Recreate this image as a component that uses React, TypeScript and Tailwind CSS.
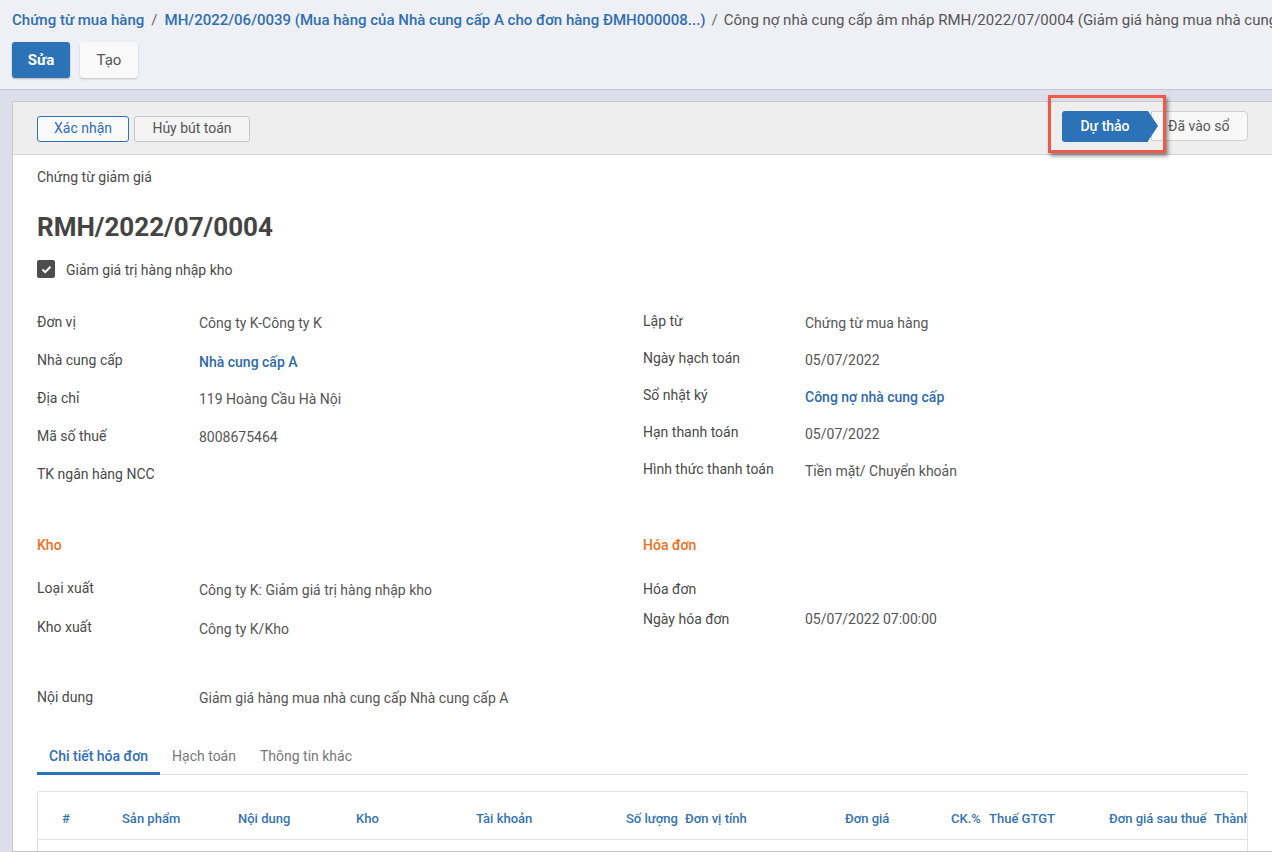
import React from "react";

const font = { fontFamily: "Roboto, 'Noto Sans', sans-serif" };

type Field = { label: string; value?: string; link?: boolean };

const leftFields: Field[] = [
  { label: "Đơn vị", value: "Công ty K-Công ty K" },
  { label: "Nhà cung cấp", value: "Nhà cung cấp A", link: true },
  { label: "Địa chỉ", value: "119 Hoàng Cầu Hà Nội" },
  { label: "Mã số thuế", value: "8008675464" },
  { label: "TK ngân hàng NCC" },
];

const rightFields: Field[] = [
  { label: "Lập từ", value: "Chứng từ mua hàng" },
  { label: "Ngày hạch toán", value: "05/07/2022" },
  { label: "Sổ nhật ký", value: "Công nợ nhà cung cấp", link: true },
  { label: "Hạn thanh toán", value: "05/07/2022" },
  { label: "Hình thức thanh toán", value: "Tiền mặt/ Chuyển khoản" },
];

const columns: { name: string; w: number }[] = [
  { name: "#", w: 60 },
  { name: "Sản phẩm", w: 116 },
  { name: "Nội dung", w: 118 },
  { name: "Kho", w: 120 },
  { name: "Tài khoản", w: 150 },
  { name: "Số lượng", w: 59 },
  { name: "Đơn vị tính", w: 160 },
  { name: "Đơn giá", w: 106 },
  { name: "CK.%", w: 38 },
  { name: "Thuế GTGT", w: 120 },
  { name: "Đơn giá sau thuế", w: 105 },
  { name: "Thành tiền", w: 120 },
];

function FieldRow({ f, h }: { f: Field; h: string }) {
  return (
    <div className={`flex items-center ${h}`}>
      <div className="w-[162px] shrink-0 text-[14px] text-[#4a4a4a]">{f.label}</div>
      {f.value && (
        <div
          className={
            f.link
              ? "pt-[4px] text-[14px] font-medium text-[#2f6aa8]"
              : "pt-[3px] text-[14px] text-[#555]"
          }
        >
          {f.value}
        </div>
      )}
    </div>
  );
}

export default function App() {
  return (
    <div
      className="relative flex h-[852px] w-[1272px] flex-col overflow-hidden bg-[#dcdeea]"
      style={font}
    >
      {/* top control panel */}
      <div className="shrink-0 border-b border-[#c3c5cf] bg-[#eff0f5] pl-[12px]">
        <div className="flex h-[30px] items-end overflow-hidden whitespace-nowrap text-[15px] leading-[20px]">
          <span className="font-medium text-[#2f6fb0]">Chứng từ mua hàng</span>
          <span className="mx-[7px] text-[#666]">/</span>
          <span className="font-medium text-[#2f6fb0]">
            MH/2022/06/0039 (Mua hàng của Nhà cung cấp A cho đơn hàng ĐMH000008...)
          </span>
          <span className="mx-[6px] text-[#666]">/</span>
          <span className="text-[#555]">
            Công nợ nhà cung cấp âm nháp RMH/2022/07/0004 (Giảm giá hàng mua nhà cung cấp Nhà cung cấp A)
          </span>
        </div>
        <div className="flex gap-[10px] pb-[11px] pt-[12px]">
          <button className="h-[36px] w-[58px] rounded-[3px] bg-[#2b73b6] text-[15px] font-bold text-white shadow-[0_1px_2px_rgba(0,0,0,0.25)]">
            Sửa
          </button>
          <button className="h-[36px] w-[58px] rounded-[3px] bg-[#f9f9f9] text-[15px] text-[#555] shadow-[0_1px_2px_rgba(0,0,0,0.2)]">
            Tạo
          </button>
        </div>
      </div>

      {/* card */}
      <div className="ml-[12px] mt-[11px] flex min-h-0 flex-1 flex-col overflow-hidden border border-r-0 border-[#c8c8cc] bg-white">
        <div className="flex h-[53px] shrink-0 items-center justify-between border-b border-[#d4d4d4] bg-[#eeeeee] pl-[24px] pr-[24px]">
          <div className="flex gap-[5px] pt-[1px]">
            <button className="h-[26px] w-[92px] rounded-[3px] border border-[#2f72b3] bg-[#f9f9f9] text-[14px] text-[#2f6db5]">
              Xác nhận
            </button>
            <button className="h-[26px] w-[116px] rounded-[3px] border border-[#c6c6c6] bg-[#f4f4f4] text-[14px] text-[#555]">
              Hủy bút toán
            </button>
          </div>
          <div className="flex items-center pb-[4px]">
            <div className="relative z-10 flex items-center">
              <div className="flex h-[31px] w-[86px] items-center justify-center rounded-l-[3px] bg-[#2b73b6] text-[14px] font-medium text-white">
                Dự thảo
              </div>
              <div className="h-0 w-0 border-y-[15.5px] border-l-[10px] border-y-transparent border-l-[#2b73b6]" />
            </div>
            <div className="-ml-[7px] flex h-[30px] w-[97px] items-center rounded-r-[4px] border border-[#cfcfcf] bg-[#f8f8f8] pl-[16px] text-[14px] text-[#555]">
              Đã vào sổ
            </div>
          </div>
        </div>

        <div className="pl-[24px] pr-[24px]">
          <div className="pt-[12px] text-[14px] leading-[20px] text-[#4a4a4a]">Chứng từ giảm giá</div>
          <div className="mt-[24px] text-[26px] font-bold leading-[32px] text-[#444]">RMH/2022/07/0004</div>
          <div className="mt-[16px] flex h-[20px] items-center">
            <div className="flex h-[18px] w-[18px] items-center justify-center rounded-[2px] bg-[#4d4d4d]">
              <svg width="11" height="9" viewBox="0 0 11 9" fill="none">
                <path d="M1.5 4.5 4.2 7.2 9.5 1.8" stroke="white" strokeWidth="2" />
              </svg>
            </div>
            <span className="ml-[11px] pt-[3px] text-[14px] text-[#4a4a4a]">Giảm giá trị hàng nhập kho</span>
          </div>

          <div className="mt-[24px] grid grid-cols-[606px_1fr]">
            <div>
              {leftFields.map(f => (
                <FieldRow key={f.label} f={f} h="h-[38px]" />
              ))}
            </div>
            <div>
              {rightFields.map(f => (
                <FieldRow key={f.label} f={f} h="h-[37px]" />
              ))}
            </div>
          </div>

          <div className="mt-[42px] grid grid-cols-[606px_1fr]">
            <div>
              <div className="h-[20px] text-[14px] font-medium leading-[20px] text-[#f07020]">Kho</div>
              <div className="mt-[14px]">
                <FieldRow f={{ label: "Loại xuất", value: "Công ty K: Giảm giá trị hàng nhập kho" }} h="h-[39px]" />
                <FieldRow f={{ label: "Kho xuất", value: "Công ty K/Kho" }} h="h-[39px]" />
              </div>
            </div>
            <div>
              <div className="h-[20px] text-[14px] font-medium leading-[20px] text-[#f07020]">Hóa đơn</div>
              <div className="mt-[19px]">
                <div className="flex h-[30px] items-center">
                  <div className="w-[162px] text-[14px] text-[#4a4a4a]">Hóa đơn</div>
                </div>
                <div className="flex h-[30px] items-center">
                  <div className="w-[162px] text-[14px] text-[#4a4a4a]">Ngày hóa đơn</div>
                  <div className="text-[14px] text-[#555]">05/07/2022 07:00:00</div>
                </div>
              </div>
            </div>
          </div>

          <div className="mt-[31px]">
            <FieldRow f={{ label: "Nội dung", value: "Giảm giá hàng mua nhà cung cấp Nhà cung cấp A" }} h="h-[38px]" />
          </div>

          {/* tabs */}
          <div className="mt-[22px] flex border-b border-[#dedede]">
            <div className="-mb-px border-b-[3px] border-[#2b73b6] px-[12px] pb-[5px] pt-[8px] text-[14px] font-medium text-[#2f6db5]">
              Chi tiết hóa đơn
            </div>
            <div className="px-[12px] pb-[5px] pt-[8px] text-[14px] text-[#777]">Hạch toán</div>
            <div className="px-[12px] pb-[5px] pt-[8px] text-[14px] text-[#777]">Thông tin khác</div>
          </div>

          <div className="mt-[16px] overflow-hidden rounded-t-[3px] border border-b-0 border-[#e2e2e2]">
            <div className="flex h-[48px] items-center whitespace-nowrap border-b border-[#e2e2e2] pl-[24px] pt-[6px]">
              {columns.map(c => (
                <div
                  key={c.name}
                  className="shrink-0 text-[13px] font-medium text-[#3572b0]"
                  style={{ width: c.w }}
                >
                  {c.name}
                </div>
              ))}
            </div>
            <div className="h-[40px]" />
          </div>
        </div>
      </div>

      {/* highlight marker */}
      <div className="absolute left-[1048px] top-[95px] h-[58px] w-[118px] border-[3px] border-[#ef5a48] shadow-[2px_3px_4px_rgba(0,0,0,0.45)]" />
    </div>
  );
}
